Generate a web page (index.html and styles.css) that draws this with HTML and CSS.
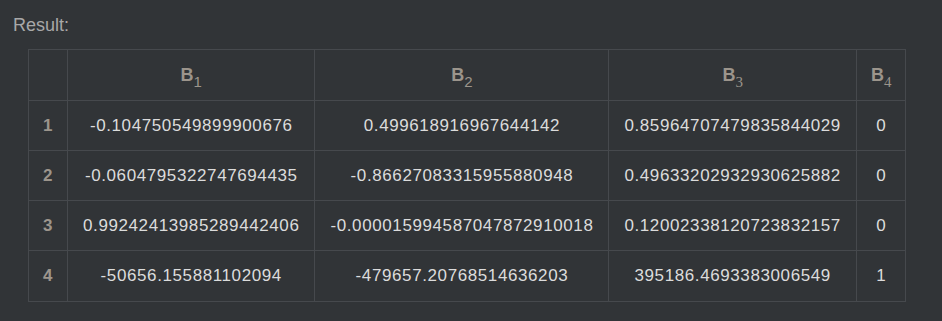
FILE: index.html
```html
<!DOCTYPE html>
<html>
<head>
<meta charset="utf-8">
<link rel="stylesheet" href="styles.css">
</head>
<body>
<div class="label">Result:</div>
<table class="result">
  <thead>
    <tr>
      <th class="idx"></th>
      <th>B<sub>1</sub></th>
      <th>B<sub>2</sub></th>
      <th>B<sub class="serif">3</sub></th>
      <th>B<sub class="serif">4</sub></th>
    </tr>
  </thead>
  <tbody>
    <tr><th class="idx">1</th><td>-0.104750549899900676</td><td>0.499618916967644142</td><td>0.85964707479835844029</td><td>0</td></tr>
    <tr><th class="idx">2</th><td>-0.0604795322747694435</td><td>-0.86627083315955880948</td><td>0.49633202932930625882</td><td>0</td></tr>
    <tr><th class="idx">3</th><td>0.99242413985289442406</td><td>-0.000015994587047872910018</td><td>0.12002338120723832157</td><td>0</td></tr>
    <tr><th class="idx">4</th><td>-50656.155881102094</td><td>-479657.20768514636203</td><td>395186.4693383006549</td><td>1</td></tr>
  </tbody>
</table>
</body>
</html>
```

FILE: styles.css
```css
html, body {
  margin: 0;
  background: #313437;
}
body {
  padding: 14px 0 0 13px;
  font-family: "Liberation Sans", Arial, sans-serif;
  font-size: 17px;
}
.label {
  color: #a8a8a8;
  font-size: 18px;
  line-height: 22px;
  margin-bottom: 13px;
}
.result {
  border-collapse: collapse;
  margin-left: 15px;
}
.result th, .result td {
  border: 1px solid #46494d;
  height: 50px;
  padding: 0 15px;
  text-align: center;
  white-space: nowrap;
  box-sizing: border-box;
  letter-spacing: 0.6px;
}
.result tbody tr:last-child th, .result tbody tr:last-child td {
  height: 51px;
}
.result td {
  color: #dcdcdc;
}
.result th {
  color: #9c958c;
  font-weight: bold;
}
.result thead th {
  height: 51px;
  letter-spacing: 0;
  font-size: 18px;
  padding: 0 14px;
}
.result th sub {
  font-weight: normal;
  font-size: 15px;
  vertical-align: -6px;
  line-height: 0;
}
.result th sub.serif {
  font-family: "Liberation Serif", "Times New Roman", serif;
  font-size: 15px;
}
.result th.idx {
  width: 39px;
  padding: 0;
}
```
